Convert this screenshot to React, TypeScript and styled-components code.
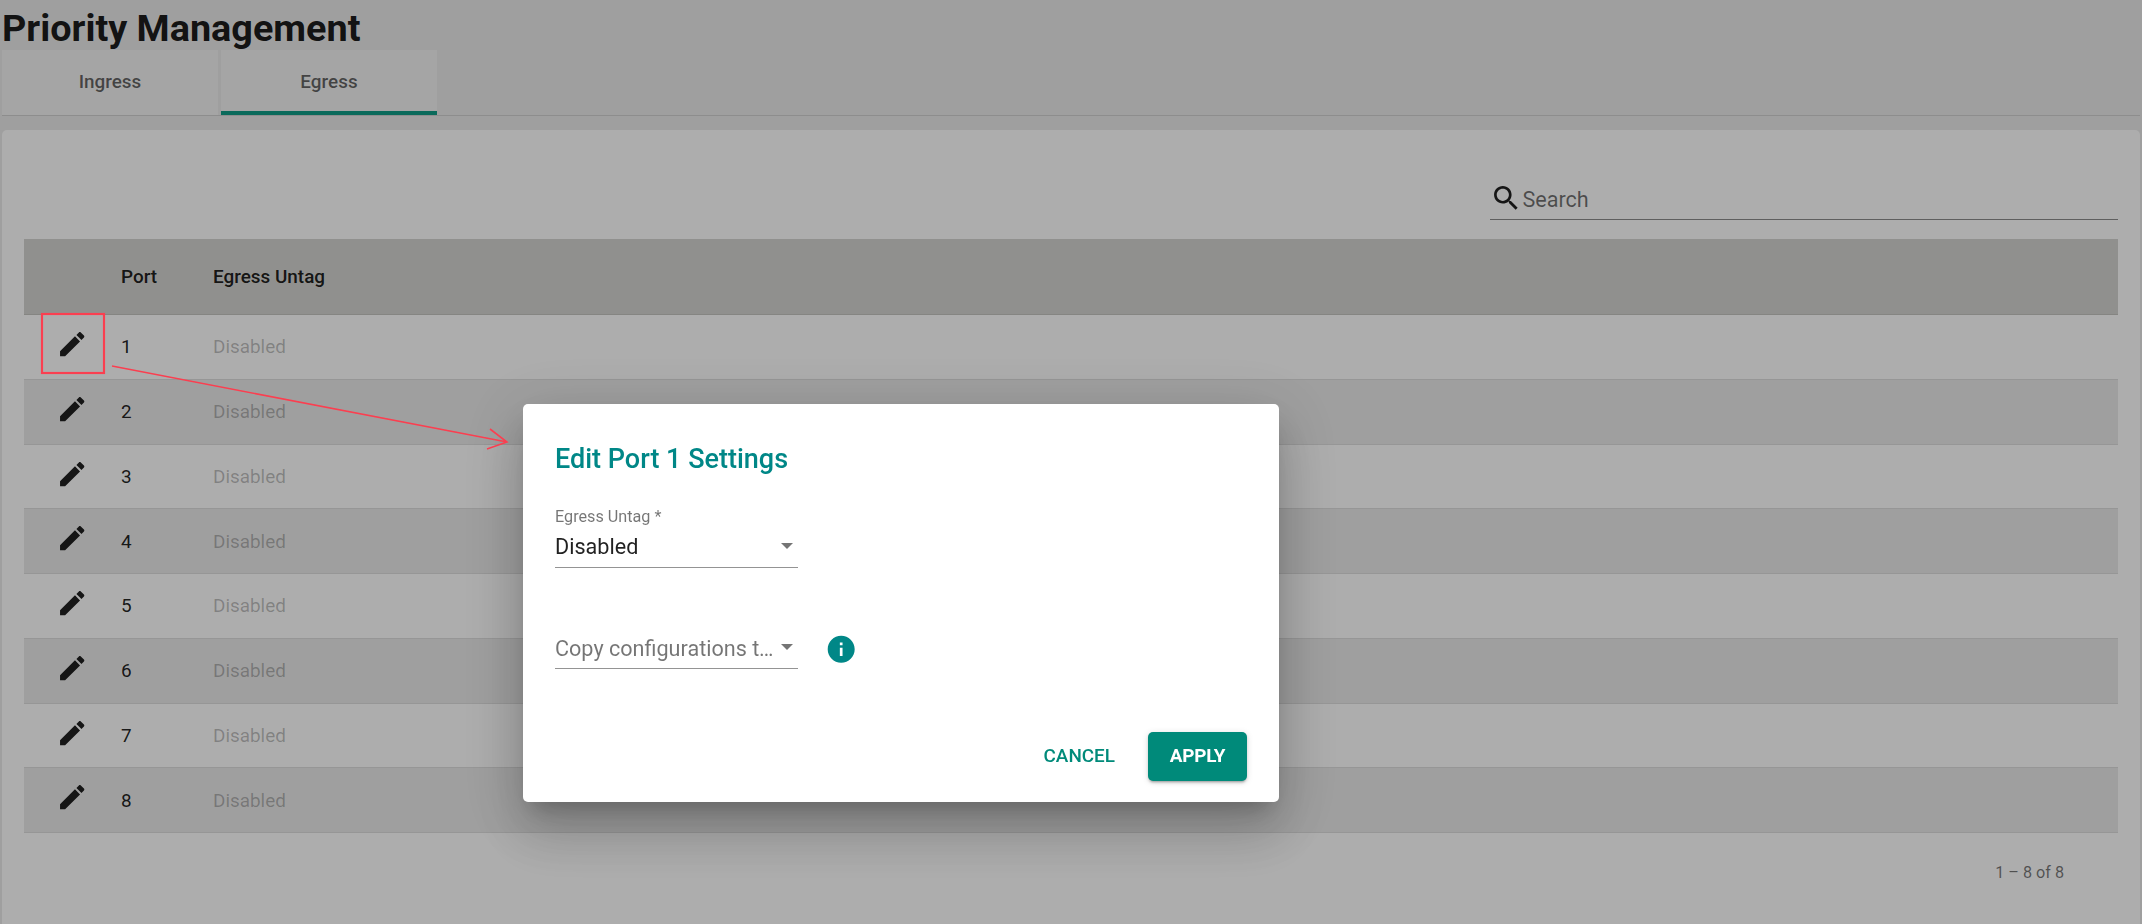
import React from 'react';
import styled, { createGlobalStyle } from 'styled-components';

// ===== DATA =====
const PORTS = [1, 2, 3, 4, 5, 6, 7, 8];

const ICON_PATHS = {
  edit: 'M3 17.25V21h3.75L17.81 9.94l-3.75-3.75L3 17.25zM20.71 7.04c.39-.39.39-1.02 0-1.41l-2.34-2.34c-.39-.39-1.02-.39-1.41 0l-1.83 1.83 3.75 3.75 1.83-1.83z',
  search: 'M15.5 14h-.79l-.28-.27C15.41 12.59 16 11.11 16 9.5 16 5.91 13.09 3 9.5 3S3 5.91 3 9.5 5.91 16 9.5 16c1.61 0 3.09-.59 4.23-1.57l.27.28v.79l5 4.99L20.49 19l-4.99-5zm-6 0C7.01 14 5 11.99 5 9.5S7.01 5 9.5 5 14 7.01 14 9.5 11.99 14 9.5 14z',
  info: 'M12 2C6.48 2 2 6.48 2 12s4.48 10 10 10 10-4.48 10-10S17.52 2 12 2zm1 15h-2v-6h2v6zm0-8h-2V7h2v2z',
};

// ===== STYLED COMPONENTS =====
const GlobalStyle = createGlobalStyle`
  html, body {
    margin: 0;
    height: 924px;
    overflow: hidden;
    background: #ebebeb;
    font-family: Roboto, "Liberation Sans", sans-serif;
  }
  * {
    box-sizing: border-box;
  }
`;

const Page = styled.main`
  display: flex;
  flex-direction: column;
  height: 924px;
  padding: 0 2px;
`;

const PageTitle = styled.h1`
  margin: 0;
  height: 50px;
  padding-top: 7px;
  font-size: 37.8px;
  line-height: 42px;
  font-weight: 700;
  color: rgba(0, 0, 0, 0.9);
  white-space: nowrap;
`;

const TabBar = styled.div`
  display: flex;
  gap: 3px;
  height: 66px;
  border-bottom: 1px solid #d0d0d0;
`;

const Tab = styled.div<{ $active?: boolean }>`
  width: 216px;
  height: 65px;
  display: flex;
  align-items: center;
  justify-content: center;
  background: #f4f4f4;
  font-size: 18.9px;
  font-weight: 500;
  color: rgba(0, 0, 0, 0.6);
  border-bottom: 4px solid ${({ $active }) => ($active ? '#0f9d87' : 'transparent')};
  padding-top: 2px;
`;

const Card = styled.section`
  flex: 1;
  margin-top: 14px;
  padding: 0 22px;
  background: #fff;
  border-radius: 5px 5px 0 0;
  display: flex;
  flex-direction: column;
`;

const SearchRow = styled.div`
  height: 109px;
  display: flex;
  justify-content: flex-end;
  align-items: flex-end;
  padding-bottom: 19px;
`;

const SearchField = styled.div`
  width: 628px;
  height: 42px;
  display: flex;
  align-items: center;
  border-bottom: 1.5px solid #8c8c8c;
  color: rgba(0, 0, 0, 0.87);
  font-size: 21.6px;
`;

const SearchHint = styled.span`
  color: rgba(0, 0, 0, 0.56);
  padding-top: 2px;
`;

const HeaderRow = styled.div`
  display: grid;
  grid-template-columns: 97px 92px 1fr;
  align-items: center;
  height: 76px;
  background: #d5d5d1;
  border-bottom: 1px solid #c4c4c0;
  font-size: 18.9px;
  font-weight: 500;
  color: rgba(0, 0, 0, 0.87);
`;

const BodyRow = styled.div<{ $striped: boolean }>`
  display: grid;
  grid-template-columns: 97px 92px 1fr;
  align-items: center;
  height: 64.75px;
  background: ${({ $striped }) => ($striped ? '#ebebeb' : '#fff')};
  border-bottom: 1px solid #dedede;
  font-size: 18.9px;
  color: rgba(0, 0, 0, 0.87);
`;

const EditCell = styled.div`
  display: flex;
  justify-content: center;
  margin-top: -5px;
`;

const MutedCell = styled.span`
  color: rgba(0, 0, 0, 0.26);
`;

const Paginator = styled.div`
  display: flex;
  justify-content: flex-end;
  padding: 30px 54px 0 0;
  font-size: 16.2px;
  line-height: 20px;
  color: rgba(0, 0, 0, 0.54);
`;

const Backdrop = styled.div`
  position: fixed;
  inset: 0;
  background: rgba(0, 0, 0, 0.32);
`;

const Dialog = styled.div`
  position: fixed;
  left: 523px;
  top: 404px;
  width: 756px;
  height: 398px;
  padding: 32px 32px 21px;
  display: flex;
  flex-direction: column;
  background: #fff;
  border-radius: 5px;
  box-shadow: 0 15px 20px -9px rgba(0, 0, 0, 0.2), 0 32px 51px 4px rgba(0, 0, 0, 0.14),
    0 12px 62px 11px rgba(0, 0, 0, 0.12);
`;

const DialogTitle = styled.h2`
  margin: 0;
  font-size: 27px;
  line-height: 46px;
  font-weight: 500;
  color: #008787;
`;

const FieldStack = styled.div`
  flex: 1;
  display: flex;
  flex-direction: column;
  gap: 59px;
  padding-top: 25px;
`;

const FieldRow = styled.div`
  display: flex;
  align-items: flex-end;
  gap: 31px;
`;

const SelectField = styled.div`
  width: 243px;
  border-bottom: 1.5px solid #949494;
  padding-bottom: 6px;
  display: flex;
  flex-direction: column;
`;

const FieldLabel = styled.label`
  font-size: 16.2px;
  line-height: 19px;
  color: rgba(0, 0, 0, 0.54);
`;

const SelectBody = styled.div`
  display: flex;
  align-items: center;
  justify-content: space-between;
  height: 30px;
  margin-top: 5px;
  padding-right: 5px;
`;

const SelectValue = styled.span<{ $placeholder?: boolean }>`
  flex: 1;
  min-width: 0;
  margin-top: ${({ $placeholder }) => ($placeholder ? '4px' : '2px')};
  font-size: 21.6px;
  line-height: 30px;
  color: ${({ $placeholder }) => ($placeholder ? 'rgba(0, 0, 0, 0.54)' : 'rgba(0, 0, 0, 0.87)')};
  overflow: hidden;
  white-space: nowrap;
  text-overflow: ellipsis;
  padding-right: 6px;
`;

const Caret = styled.span`
  width: 0;
  height: 0;
  border-left: 6.7px solid transparent;
  border-right: 6.7px solid transparent;
  border-top: 6.7px solid rgba(0, 0, 0, 0.54);
`;

const InfoWrap = styled.div`
  display: flex;
  margin: 0 0 1px -4px;
  transform: translateY(-3px);
`;

const DialogActions = styled.div`
  display: flex;
  justify-content: flex-end;
  gap: 33px;
  align-items: center;
`;

const TextButton = styled.button`
  border: none;
  background: none;
  padding: 0 0 2px;
  font: 500 18.9px Roboto, sans-serif;
  color: #008a7a;
`;

const ApplyButton = styled.button`
  width: 99px;
  height: 49px;
  border: none;
  border-radius: 5px;
  padding: 0 0 2px;
  background: #008a7a;
  color: #fff;
  font: 700 18.9px Roboto, sans-serif;
  letter-spacing: -0.2px;
  box-shadow: 0 3px 2px -2px rgba(0, 0, 0, 0.2), 0 2px 3px 0 rgba(0, 0, 0, 0.14),
    0 1px 7px 0 rgba(0, 0, 0, 0.12);
`;

const Annotation = styled.svg`
  position: fixed;
  left: 0;
  top: 0;
  pointer-events: none;
`;

// ===== SUB-COMPONENTS =====
const Icon: React.FC<{ name: keyof typeof ICON_PATHS; color?: string }> = ({ name, color = 'currentColor' }) => (
  <svg width="32.4" height="32.4" viewBox="0 0 24 24" fill={color}>
    <path d={ICON_PATHS[name]} />
  </svg>
);

const PortRow: React.FC<{ port: number }> = ({ port }) => (
  <BodyRow $striped={port % 2 === 0}>
    <EditCell>
      <Icon name="edit" />
    </EditCell>
    <span>{port}</span>
    <MutedCell>Disabled</MutedCell>
  </BodyRow>
);

const EditDialog: React.FC = () => (
  <Dialog>
    <DialogTitle>Edit Port 1 Settings</DialogTitle>
    <FieldStack>
      <FieldRow>
        <SelectField>
          <FieldLabel>Egress Untag *</FieldLabel>
          <SelectBody>
            <SelectValue>Disabled</SelectValue>
            <Caret />
          </SelectBody>
        </SelectField>
      </FieldRow>
      <FieldRow>
        <SelectField>
          <SelectBody>
            <SelectValue $placeholder>Copy configurations to ports</SelectValue>
            <Caret />
          </SelectBody>
        </SelectField>
        <InfoWrap>
          <Icon name="info" color="#008787" />
        </InfoWrap>
      </FieldRow>
    </FieldStack>
    <DialogActions>
      <TextButton>CANCEL</TextButton>
      <ApplyButton>APPLY</ApplyButton>
    </DialogActions>
  </Dialog>
);

// ===== MAIN PAGE COMPONENT =====
const App = () => (
  <>
    <GlobalStyle />
    <Page>
      <PageTitle>Priority Management</PageTitle>
      <TabBar>
        <Tab>Ingress</Tab>
        <Tab $active>Egress</Tab>
      </TabBar>
      <Card>
        <SearchRow>
          <SearchField>
            <Icon name="search" />
            <SearchHint>Search</SearchHint>
          </SearchField>
        </SearchRow>
        <HeaderRow>
          <span />
          <span>Port</span>
          <span>Egress Untag</span>
        </HeaderRow>
        {PORTS.map(port => (
          <PortRow key={port} port={port} />
        ))}
        <Paginator>1 – 8 of 8</Paginator>
      </Card>
    </Page>
    <Backdrop />
    <EditDialog />
    <Annotation width="2142" height="924" fill="none" stroke="#fa3f50">
      <rect x="42" y="314" width="62" height="59" strokeWidth="2.2" />
      <path d="M112 366L507 442M490 429L507 442L487 449" strokeWidth="1.6" />
    </Annotation>
  </>
);

export default App;
